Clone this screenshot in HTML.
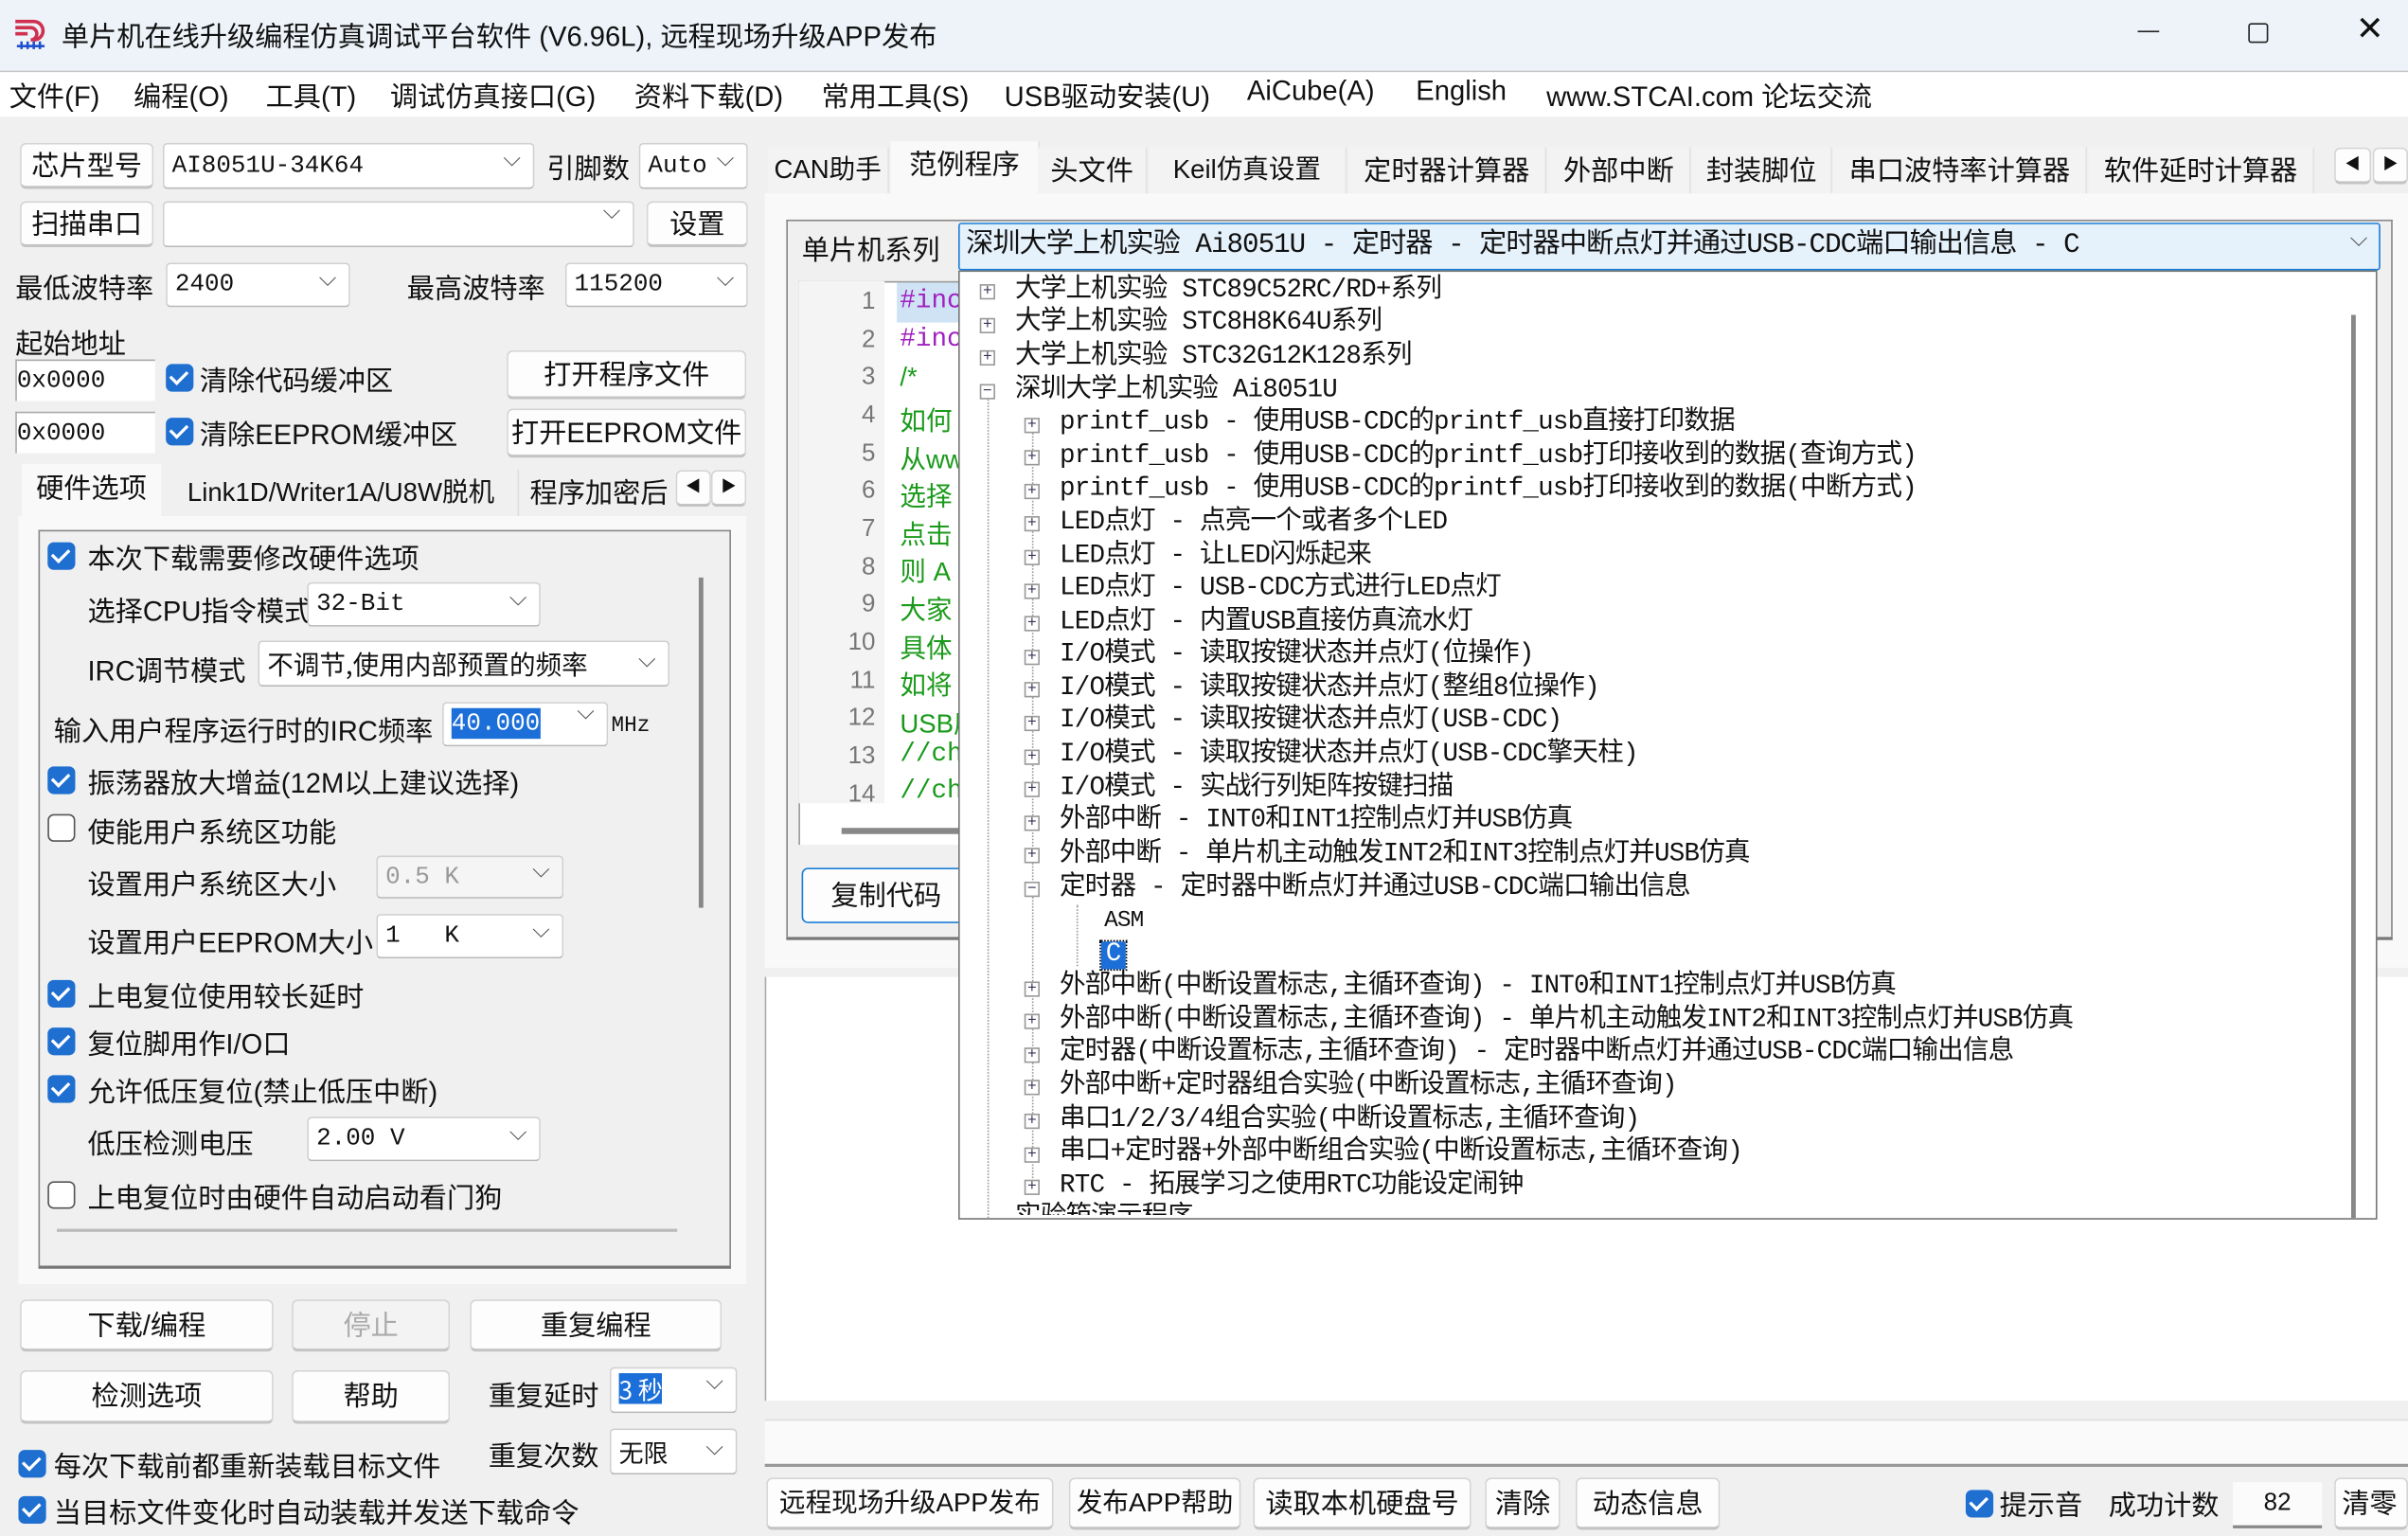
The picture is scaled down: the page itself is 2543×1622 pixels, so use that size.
<!DOCTYPE html>
<html><head><meta charset="utf-8">
<style>
html,body{margin:0;padding:0;width:2543px;height:1622px;overflow:hidden;background:#f0f0f0}
#w{position:absolute;left:0;top:0;width:1568px;height:1000px;transform:scale(1.6218,1.622);transform-origin:0 0;background:#f0f0f0;font-family:"Liberation Sans","Noto Sans CJK SC",sans-serif;font-size:17px;color:#111}
.a{position:absolute;white-space:nowrap}
.btn{position:absolute;background:#fdfdfd;border:1px solid #d4d4d4;border-bottom:2px solid #c4c4c4;border-radius:4px;text-align:center;box-sizing:border-box;white-space:nowrap}
.cb{position:absolute;background:#fff;border:1px solid #d0d0d0;border-bottom:1px solid #b8b8b8;border-radius:3px;box-sizing:border-box;white-space:nowrap;padding-left:5px;font-family:"Liberation Mono","Noto Sans CJK SC",monospace;font-size:16px}
.cb:after{content:"⌵";position:absolute;right:8px;top:-3px;color:#555;font-size:15px}
.ck{position:absolute;width:18px;height:18px;border-radius:4px;background:#1f6fd1;box-sizing:border-box}
.ck:after{content:"";position:absolute;left:5px;top:2px;width:5px;height:9px;border:solid #fff;border-width:0 2px 2px 0;transform:rotate(45deg)}
.uk{position:absolute;width:18px;height:18px;border-radius:4px;border:1.5px solid #555;background:#fff;box-sizing:border-box}
.mono{font-family:"Liberation Mono","Noto Sans CJK SC",monospace}
.tab{position:absolute;top:96px;height:30px;line-height:30px;text-align:center;font-size:18px;border-right:1px solid #e2e2e2;background:#f3f3f3}
.tr{position:absolute;height:21.6px;line-height:21.6px;font-size:17px;white-space:nowrap;font-family:"Liberation Mono","Noto Sans CJK SC",monospace;letter-spacing:-0.5px}
.ex{position:absolute;width:10px;height:10px;border:1px solid #999;background:#fff;box-sizing:border-box;font-size:10px;line-height:8px;text-align:center;color:#335;font-family:"Liberation Sans",sans-serif}
.ln{position:absolute;left:540px;width:30px;text-align:right;color:#777;font-size:16px}
.cd{position:absolute;left:586px;color:#1a9a1a;font-size:17px}
.mn{position:absolute;top:49px;font-size:18px;white-space:nowrap}
</style></head><body><div id="w">
<!-- title -->
<div class="a" style="left:0;top:0;width:1568px;height:46px;background:#edf3f9;border-bottom:1px solid #c8c8c8"></div>
<svg class="a" style="left:8px;top:10px" width="24" height="24" viewBox="0 0 24 24"><path d="M2 4h12a6 6 0 0 1 0 12M2 8h10a4 4 0 0 1 0 8M2 12h8" stroke="#d03050" stroke-width="2.2" fill="none"/><path d="M3 20h18M6 17v5M10 17v5M14 17v5M18 17v5" stroke="#2050d0" stroke-width="1.6" fill="none"/></svg>
<div class="a" style="left:40px;top:10px;font-size:18px">单片机在线升级编程仿真调试平台软件 (V6.96L), 远程现场升级APP发布</div>
<div class="a" style="left:1392px;top:20px;width:14px;height:1px;background:#222"></div>
<div class="a" style="left:1464px;top:15px;width:11px;height:11px;border:1.3px solid #222;border-radius:2px"></div>
<div class="a" style="left:1534px;top:6px;font-size:22px;font-weight:200">✕</div>
<!-- menu -->
<div class="a" style="left:0;top:47px;width:1568px;height:29px;background:#fff"></div>
<div class="mn" style="left:6px">文件(F)</div>
<div class="mn" style="left:87px">编程(O)</div>
<div class="mn" style="left:173px">工具(T)</div>
<div class="mn" style="left:254px">调试仿真接口(G)</div>
<div class="mn" style="left:413px">资料下载(D)</div>
<div class="mn" style="left:535px">常用工具(S)</div>
<div class="mn" style="left:654px">USB驱动安装(U)</div>
<div class="mn" style="left:812px">AiCube(A)</div>
<div class="mn" style="left:922px">English</div>
<div class="mn" style="left:1007px">www.STCAI.com 论坛交流</div>
<!-- left top rows -->
<div class="btn" style="left:13px;top:93px;width:87px;height:30px;line-height:28px;font-size:18px">芯片型号</div>
<div class="cb" style="left:106px;top:93px;width:242px;height:30px;line-height:28px">AI8051U-34K64</div>
<div class="a" style="left:356px;top:96px;font-size:18px">引脚数</div>
<div class="cb" style="left:416px;top:93px;width:71px;height:30px;line-height:28px">Auto</div>
<div class="btn" style="left:13px;top:131px;width:87px;height:30px;line-height:28px;font-size:18px">扫描串口</div>
<div class="cb" style="left:106px;top:131px;width:307px;height:30px"></div>
<div class="btn" style="left:421px;top:131px;width:66px;height:30px;line-height:28px;font-size:18px">设置</div>
<div class="a" style="left:10px;top:174px;font-size:18px">最低波特率</div>
<div class="cb" style="left:108px;top:171px;width:120px;height:29px;line-height:27px">2400</div>
<div class="a" style="left:265px;top:174px;font-size:18px">最高波特率</div>
<div class="cb" style="left:368px;top:171px;width:119px;height:29px;line-height:27px">115200</div>
<div class="a" style="left:10px;top:210px;font-size:18px">起始地址</div>
<div class="a mono" style="left:10px;top:234px;width:90px;height:26px;line-height:26px;background:#fff;border-top:1px solid #aaa;border-left:1px solid #aaa;font-size:16px">0x0000</div>
<div class="ck" style="left:108px;top:237px"></div>
<div class="a" style="left:130px;top:234px;font-size:18px">清除代码缓冲区</div>
<div class="btn" style="left:330px;top:228px;width:156px;height:32px;line-height:30px;font-size:18px">打开程序文件</div>
<div class="a mono" style="left:10px;top:268px;width:90px;height:26px;line-height:26px;background:#fff;border-top:1px solid #aaa;border-left:1px solid #aaa;font-size:16px">0x0000</div>
<div class="ck" style="left:108px;top:272px"></div>
<div class="a" style="left:130px;top:269px;font-size:18px">清除EEPROM缓冲区</div>
<div class="btn" style="left:330px;top:266px;width:156px;height:32px;line-height:30px;font-size:18px">打开EEPROM文件</div>
<!-- left tabs -->
<div class="a" style="left:14px;top:302px;width:91px;height:34px;background:#f9f9f9;line-height:32px;text-align:center;font-size:18px">硬件选项</div>
<div class="a" style="left:107px;top:306px;width:230px;height:30px;line-height:30px;text-align:center;font-size:17px;border-right:1px solid #ddd">Link1D/Writer1A/U8W脱机</div>
<div class="a" style="left:340px;top:306px;width:100px;height:30px;line-height:30px;text-align:center;font-size:18px;overflow:hidden">程序加密后</div>
<div class="btn" style="left:440px;top:306px;width:23px;height:24px;line-height:22px;font-size:10px">◀</div>
<div class="btn" style="left:463px;top:306px;width:23px;height:24px;line-height:22px;font-size:10px">▶</div>
<div class="a" style="left:12px;top:336px;width:474px;height:500px;background:#f9f9f9"></div>
<div class="a" style="left:25px;top:345px;width:449px;height:478px;border:1px solid #888;border-bottom:2px solid #777;background:#f0f0f0"></div>
<div class="a" style="left:455px;top:376px;width:3px;height:215px;background:#888"></div>
<div class="a" style="left:37px;top:800px;width:404px;height:2px;background:#bbb"></div>
<div class="ck" style="left:31px;top:353px"></div><div class="a" style="left:57px;top:350px;font-size:18px">本次下载需要修改硬件选项</div>
<div class="a" style="left:57px;top:384px;font-size:18px">选择CPU指令模式</div><div class="cb" style="left:200px;top:379px;width:152px;height:29px;line-height:27px">32-Bit</div>
<div class="a" style="left:57px;top:423px;font-size:18px">IRC调节模式</div><div class="cb" style="left:168px;top:417px;width:268px;height:30px;line-height:28px;font-family:'Noto Sans CJK SC',sans-serif;font-size:17px">不调节,使用内部预置的频率</div>
<div class="a" style="left:35px;top:462px;font-size:18px">输入用户程序运行时的IRC频率</div>
<div class="cb" style="left:288px;top:457px;width:108px;height:29px"><span style="background:#1c6fd8;color:#fff;line-height:20px;display:inline-block;margin-top:3px">40.000</span></div>
<div class="a mono" style="left:398px;top:465px;font-size:14px">MHz</div>
<div class="ck" style="left:31px;top:499px"></div><div class="a" style="left:57px;top:496px;font-size:18px">振荡器放大增益(12M以上建议选择)</div>
<div class="uk" style="left:31px;top:530px"></div><div class="a" style="left:57px;top:528px;font-size:18px">使能用户系统区功能</div>
<div class="a" style="left:57px;top:562px;font-size:18px">设置用户系统区大小</div><div class="cb" style="left:245px;top:557px;width:122px;height:28px;line-height:26px;color:#999;background:#f5f5f5">0.5 K</div>
<div class="a" style="left:57px;top:600px;font-size:18px">设置用户EEPROM大小</div><div class="cb" style="left:245px;top:595px;width:122px;height:29px;line-height:27px">1&nbsp;&nbsp;&nbsp;K</div>
<div class="ck" style="left:31px;top:638px"></div><div class="a" style="left:57px;top:635px;font-size:18px">上电复位使用较长延时</div>
<div class="ck" style="left:31px;top:669px"></div><div class="a" style="left:57px;top:666px;font-size:18px">复位脚用作I/O口</div>
<div class="ck" style="left:31px;top:700px"></div><div class="a" style="left:57px;top:697px;font-size:18px">允许低压复位(禁止低压中断)</div>
<div class="a" style="left:57px;top:731px;font-size:18px">低压检测电压</div><div class="cb" style="left:200px;top:727px;width:152px;height:29px;line-height:27px">2.00 V</div>
<div class="uk" style="left:31px;top:769px"></div><div class="a" style="left:57px;top:766px;font-size:18px">上电复位时由硬件自动启动看门狗</div>
<!-- bottom left buttons -->
<div class="btn" style="left:13px;top:846px;width:165px;height:34px;line-height:32px;font-size:18px">下载/编程</div>
<div class="btn" style="left:190px;top:846px;width:103px;height:34px;line-height:32px;font-size:18px;color:#aaa;background:#f3f3f3">停止</div>
<div class="btn" style="left:306px;top:846px;width:164px;height:34px;line-height:32px;font-size:18px">重复编程</div>
<div class="btn" style="left:13px;top:892px;width:165px;height:35px;line-height:33px;font-size:18px">检测选项</div>
<div class="btn" style="left:190px;top:892px;width:103px;height:35px;line-height:33px;font-size:18px">帮助</div>
<div class="a" style="left:318px;top:895px;font-size:18px">重复延时</div>
<div class="cb" style="left:397px;top:890px;width:83px;height:30px;font-family:'Noto Sans CJK SC',sans-serif"><span style="background:#1c6fd8;color:#fff;display:inline-block;margin-top:3px;line-height:20px">3 秒</span></div>
<div class="ck" style="left:12px;top:944px"></div><div class="a" style="left:35px;top:941px;font-size:18px">每次下载前都重新装载目标文件</div>
<div class="a" style="left:318px;top:934px;font-size:18px">重复次数</div>
<div class="cb" style="left:397px;top:930px;width:83px;height:30px;line-height:28px;font-family:'Noto Sans CJK SC',sans-serif">无限</div>
<div class="ck" style="left:12px;top:974px"></div><div class="a" style="left:35px;top:971px;font-size:18px">当目标文件变化时自动装载并发送下载命令</div>
<!-- right tabs -->
<div class="tab" style="left:500px;width:78px;font-size:17px">CAN助手</div>
<div class="tab" style="left:580px;width:96px;top:92px;height:34px;background:#f9f9f9">范例程序</div>
<div class="tab" style="left:676px;width:70px">头文件</div>
<div class="tab" style="left:748px;width:128px;font-size:17px">Keil仿真设置</div>
<div class="tab" style="left:878px;width:128px">定时器计算器</div>
<div class="tab" style="left:1008px;width:92px">外部中断</div>
<div class="tab" style="left:1102px;width:90px">封装脚位</div>
<div class="tab" style="left:1194px;width:164px">串口波特率计算器</div>
<div class="tab" style="left:1360px;width:146px">软件延时计算器</div>
<div class="btn" style="left:1520px;top:96px;width:24px;height:24px;line-height:22px;font-size:10px">◀</div>
<div class="btn" style="left:1545px;top:96px;width:23px;height:24px;line-height:22px;font-size:10px">▶</div>
<div class="a" style="left:498px;top:126px;width:1070px;height:504px;background:#f9f9f9"></div>
<div class="a" style="left:512px;top:143px;width:1044px;height:466px;border:1px solid #888;border-bottom:2px solid #777;background:#f0f0f0"></div>
<div class="a" style="left:522px;top:149px;font-size:18px">单片机系列</div>
<div class="a" style="left:624px;top:145px;width:920px;height:29px;background:#e5f1fb;border:1.5px solid #1c7fd6;border-radius:2px;font-size:18px;line-height:28px;padding-left:4px;font-family:'Liberation Mono','Noto Sans CJK SC',monospace;letter-spacing:-0.6px">深圳大学上机实验 Ai8051U - 定时器 - 定时器中断点灯并通过USB-CDC端口输出信息 - C<span style="position:absolute;right:8px;top:-3px;color:#555;font-size:15px">⌵</span></div>
<!-- code editor -->
<div class="a" style="left:520px;top:183px;width:120px;height:366px;background:#fff;border-top:1px solid #999;border-left:1px solid #999"></div>
<div class="a" style="left:520px;top:183px;width:56px;height:340px;background:#f4f4f4"></div>
<div class="a" style="left:584px;top:184px;width:40px;height:26px;background:#cfe3f5"></div>
<div class="a" style="left:548px;top:539px;width:80px;height:4px;background:#888"></div>
<div class="ln" style="top:188px">1</div><div class="cd mono" style="top:187px;color:#a020c0">#inc</div>
<div class="ln" style="top:213px">2</div><div class="cd mono" style="top:212px;color:#a020c0">#inc</div>
<div class="ln" style="top:237px">3</div><div class="cd" style="top:236px">/*</div>
<div class="ln" style="top:262px">4</div><div class="cd" style="top:260px">如何</div>
<div class="ln" style="top:287px">5</div><div class="cd" style="top:285px">从ww</div>
<div class="ln" style="top:311px">6</div><div class="cd" style="top:309px">选择</div>
<div class="ln" style="top:336px">7</div><div class="cd" style="top:334px">点击</div>
<div class="ln" style="top:361px">8</div><div class="cd" style="top:358px">则 A</div>
<div class="ln" style="top:385px">9</div><div class="cd" style="top:383px">大家</div>
<div class="ln" style="top:410px">10</div><div class="cd" style="top:408px">具体</div>
<div class="ln" style="top:435px">11</div><div class="cd" style="top:432px">如将</div>
<div class="ln" style="top:459px">12</div><div class="cd" style="top:457px">USB库</div>
<div class="ln" style="top:484px">13</div><div class="cd mono" style="top:482px">//ch</div>
<div class="ln" style="top:509px">14</div><div class="cd mono" style="top:506px">//ch</div>
<div class="btn" style="left:522px;top:565px;width:110px;height:36px;line-height:34px;font-size:18px;border:1.5px solid #1c7fd6">复制代码</div>
<!-- lower right -->
<div class="a" style="left:498px;top:636px;width:1070px;height:276px;background:#fff;border-left:1px solid #aaa"></div>
<div class="a" style="left:498px;top:924px;width:1070px;height:28px;background:#fafafa;border-top:1px solid #ddd;border-bottom:2px solid #999"></div>
<div class="btn" style="left:499px;top:962px;width:187px;height:34px;line-height:32px;font-size:17px">远程现场升级APP发布</div>
<div class="btn" style="left:696px;top:962px;width:112px;height:34px;line-height:32px;font-size:17px">发布APP帮助</div>
<div class="btn" style="left:816px;top:962px;width:142px;height:34px;line-height:32px;font-size:18px">读取本机硬盘号</div>
<div class="btn" style="left:967px;top:962px;width:49px;height:34px;line-height:32px;font-size:18px">清除</div>
<div class="btn" style="left:1026px;top:962px;width:94px;height:34px;line-height:32px;font-size:18px">动态信息</div>
<div class="ck" style="left:1280px;top:970px"></div><div class="a" style="left:1302px;top:966px;font-size:18px">提示音</div>
<div class="a" style="left:1373px;top:966px;font-size:18px">成功计数</div>
<div class="a" style="left:1454px;top:965px;width:58px;height:28px;background:#fbfbfb;border-bottom:2px solid #888;text-align:center;line-height:28px;font-size:16px">82</div>
<div class="btn" style="left:1520px;top:962px;width:48px;height:34px;line-height:32px;font-size:18px;text-align:left;padding-left:4px">清零</div>
<!-- dropdown tree (on top) -->
<div class="a" style="left:624px;top:176px;width:922px;height:616px;background:#fff;border:1px solid #777;overflow:hidden">
<div class="a" style="left:18px;top:80px;width:0;height:540px;border-left:1px dotted #999"></div>
<div class="a" style="left:47px;top:100px;width:0;height:500px;border-left:1px dotted #999"></div>
<div class="a" style="left:76px;top:412px;width:0;height:40px;border-left:1px dotted #999"></div>
<div class="a" style="left:906px;top:28px;width:3px;height:588px;background:#888"></div>
</div>
<div class="a" style="left:625px;top:177px;width:920px;height:614px;overflow:hidden">
<div class="ex" style="left:13px;top:8px">+</div><div class="tr" style="left:36px;top:2px">大学上机实验 STC89C52RC/RD+系列</div>
<div class="ex" style="left:13px;top:30px">+</div><div class="tr" style="left:36px;top:23px">大学上机实验 STC8H8K64U系列</div>
<div class="ex" style="left:13px;top:51px">+</div><div class="tr" style="left:36px;top:45px">大学上机实验 STC32G12K128系列</div>
<div class="ex" style="left:13px;top:73px">−</div><div class="tr" style="left:36px;top:67px">深圳大学上机实验 Ai8051U</div>
<div class="ex" style="left:42px;top:95px">+</div><div class="tr" style="left:65px;top:88px">printf_usb - 使用USB-CDC的printf_usb直接打印数据</div>
<div class="ex" style="left:42px;top:116px">+</div><div class="tr" style="left:65px;top:110px">printf_usb - 使用USB-CDC的printf_usb打印接收到的数据(查询方式)</div>
<div class="ex" style="left:42px;top:138px">+</div><div class="tr" style="left:65px;top:131px">printf_usb - 使用USB-CDC的printf_usb打印接收到的数据(中断方式)</div>
<div class="ex" style="left:42px;top:159px">+</div><div class="tr" style="left:65px;top:153px">LED点灯 - 点亮一个或者多个LED</div>
<div class="ex" style="left:42px;top:181px">+</div><div class="tr" style="left:65px;top:175px">LED点灯 - 让LED闪烁起来</div>
<div class="ex" style="left:42px;top:203px">+</div><div class="tr" style="left:65px;top:196px">LED点灯 - USB-CDC方式进行LED点灯</div>
<div class="ex" style="left:42px;top:224px">+</div><div class="tr" style="left:65px;top:218px">LED点灯 - 内置USB直接仿真流水灯</div>
<div class="ex" style="left:42px;top:246px">+</div><div class="tr" style="left:65px;top:239px">I/O模式 - 读取按键状态并点灯(位操作)</div>
<div class="ex" style="left:42px;top:267px">+</div><div class="tr" style="left:65px;top:261px">I/O模式 - 读取按键状态并点灯(整组8位操作)</div>
<div class="ex" style="left:42px;top:289px">+</div><div class="tr" style="left:65px;top:282px">I/O模式 - 读取按键状态并点灯(USB-CDC)</div>
<div class="ex" style="left:42px;top:311px">+</div><div class="tr" style="left:65px;top:304px">I/O模式 - 读取按键状态并点灯(USB-CDC擎天柱)</div>
<div class="ex" style="left:42px;top:332px">+</div><div class="tr" style="left:65px;top:326px">I/O模式 - 实战行列矩阵按键扫描</div>
<div class="ex" style="left:42px;top:354px">+</div><div class="tr" style="left:65px;top:347px">外部中断 - INT0和INT1控制点灯并USB仿真</div>
<div class="ex" style="left:42px;top:375px">+</div><div class="tr" style="left:65px;top:369px">外部中断 - 单片机主动触发INT2和INT3控制点灯并USB仿真</div>
<div class="ex" style="left:42px;top:397px">−</div><div class="tr" style="left:65px;top:391px">定时器 - 定时器中断点灯并通过USB-CDC端口输出信息</div>
<div class="tr" style="left:94px;top:412px;font-size:15px">ASM</div>
<div class="tr" style="left:92px;top:434px;height:18px;line-height:18px;margin-top:2px;background:#1c6fd8;color:#fff;padding:0 3px;outline:1px dotted #000">C</div>
<div class="ex" style="left:42px;top:462px">+</div><div class="tr" style="left:65px;top:455px">外部中断(中断设置标志,主循环查询) - INT0和INT1控制点灯并USB仿真</div>
<div class="ex" style="left:42px;top:483px">+</div><div class="tr" style="left:65px;top:477px">外部中断(中断设置标志,主循环查询) - 单片机主动触发INT2和INT3控制点灯并USB仿真</div>
<div class="ex" style="left:42px;top:505px">+</div><div class="tr" style="left:65px;top:498px">定时器(中断设置标志,主循环查询) - 定时器中断点灯并通过USB-CDC端口输出信息</div>
<div class="ex" style="left:42px;top:526px">+</div><div class="tr" style="left:65px;top:520px">外部中断+定时器组合实验(中断设置标志,主循环查询)</div>
<div class="ex" style="left:42px;top:548px">+</div><div class="tr" style="left:65px;top:542px">串口1/2/3/4组合实验(中断设置标志,主循环查询)</div>
<div class="ex" style="left:42px;top:570px">+</div><div class="tr" style="left:65px;top:563px">串口+定时器+外部中断组合实验(中断设置标志,主循环查询)</div>
<div class="ex" style="left:42px;top:591px">+</div><div class="tr" style="left:65px;top:585px">RTC - 拓展学习之使用RTC功能设定闹钟</div>
<div class="tr" style="left:36px;top:606px">实验箱演示程序</div>
</div>
</div></body></html>
